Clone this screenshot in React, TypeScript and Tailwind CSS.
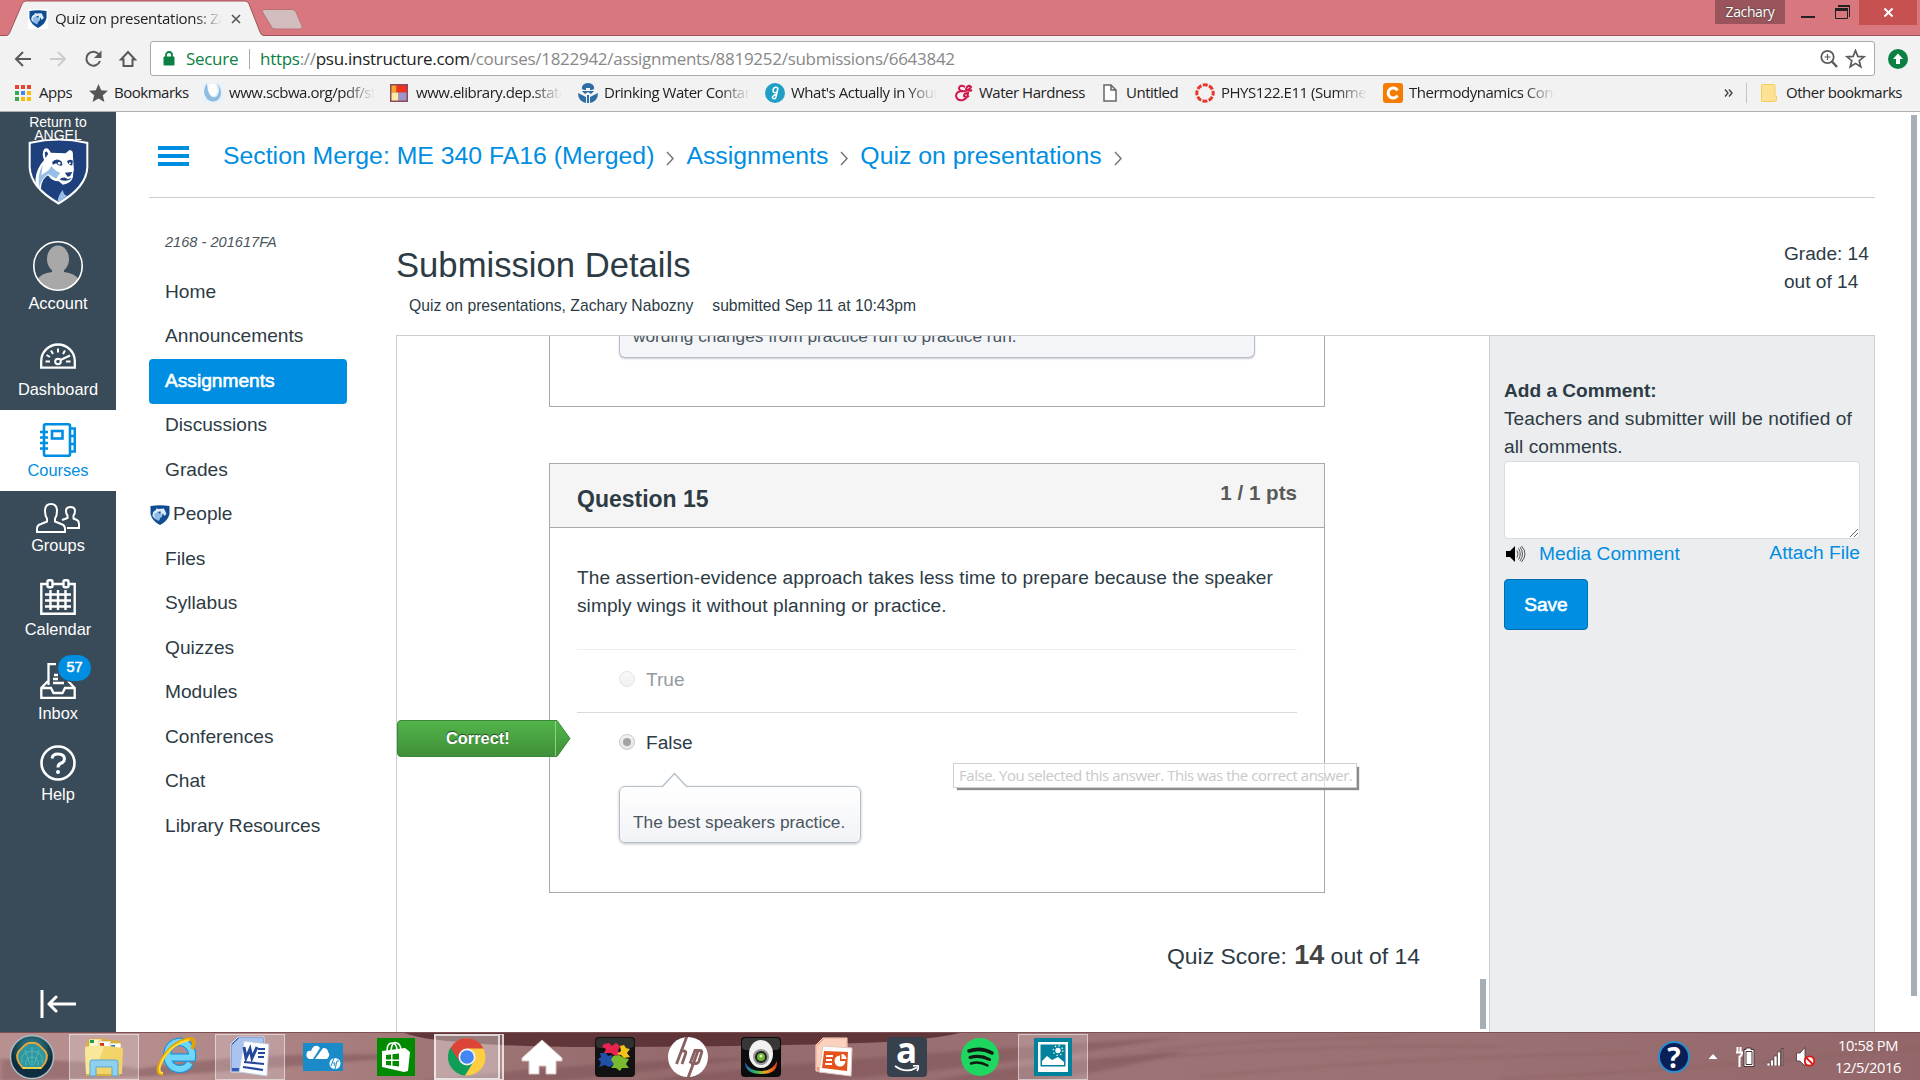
import React from "react";

const ui = "font-['Open_Sans','Noto_Sans',sans-serif]";

function Shield({ className }: { className: string }) {
  return (
    <svg viewBox="0 0 182 201" className={className} preserveAspectRatio="none">
      <path d="M2 12Q91-8 180 12V88Q178 150 91 200Q4 150 2 88Z" fill="#fff" />
      <path d="M8 17Q91-2 174 17V88Q171 146 91 192Q11 146 8 88Z" fill="#1e407c" />
      <path d="M22 126Q24 92 48 66Q40 46 48 34Q58 24 68 44L112 46L124 36Q136 36 134 54L137 96Q134 104 134 118Q128 138 104 140L92 130Q70 130 60 112Q40 122 38 154Q24 142 22 126Z" fill="#fff" />
      <path d="M44 80Q26 112 34 148Q38 124 60 108L84 122L96 104Q80 100 70 84L62 96L40 112ZM88 190Q92 168 104 156Q106 172 118 174L92 192Z" fill="#96bee6" />
      <path d="M50 44Q56 36 60 48L52 60ZM72 72Q84 58 100 70L103 82Q90 86 84 76L74 80ZM116 70Q124 62 134 68L132 82Q122 84 116 70ZM110 104L132 102L126 114L118 116ZM96 122Q112 114 118 124L130 120Q122 132 96 126Z" fill="#1e407c" />
      <circle cx="93" cy="76" r="4" fill="#fff" />
      <circle cx="125" cy="76" r="3" fill="#fff" />
    </svg>
  );
}

function MiniShield({ className }: { className: string }) {
  return (
    <svg viewBox="0 0 20 20" className={className} preserveAspectRatio="none">
      <path d="M.5 1Q10-.6 19.500 1V9Q18 16 10 20Q2 16 .5 9Z" fill="#0f4c92" />
      <path d="M2.500 11Q2.500 6 6 5Q6 2 8 4L14 3.500L16.500 9L14 11L13 8L11 13L8 8L5 14Z" fill="#dcecfa" />
      <path d="M4 9L9 6L12 9L9 16L5 14Z" fill="#8fbce6" />
      <path d="M8 7L11 6.500L10 9Z" fill="#0f4c92" />
    </svg>
  );
}

function TabStrip() {
  return (
    <div className={"flex h-[36px] items-start justify-between border-b border-[#a0535a] bg-[#d9777f] " + ui}>
      <div className="relative h-[36px] w-[310px]">
        <svg className="absolute inset-0" width="310" height="36">
          <path d="M0 35.500H7Q9 35 10 32L22 4Q23 1 26 1H245Q248 1 249 4L260 32Q261 35.500 264 35.500V37H0Z" fill="#f2f2f2" />
          <path d="M0 35.500H7Q9 35 10 32L22 4Q23 1 26 1H245Q248 1 249 4L260 32Q261 35.500 264 35.500H310" fill="none" stroke="#a0535a" />
          <path d="M0 0H21L9 31Q8 35 6 35H0Z" fill="#d9777f" />
          <path d="M264 9.500H292Q295 9.500 296 12L302 26Q303 29 300 29H275Q272 29 271 26L262.500 12Q262 9.500 264 9.500Z" fill="#d2bcbd" stroke="#b9747a" />
        </svg>
        <div className="relative flex h-[35px] items-center pl-[28px] pt-[3px]">
          <span className="flex h-[20px] w-[20px] items-center justify-center bg-white">
            <MiniShield className="h-[18px] w-[18px]" />
          </span>
          <span className="mb-[2px] ml-[7px] w-[167px] overflow-hidden whitespace-nowrap text-[15px] leading-[20px] tracking-[-0.3px] text-[#222] [mask-image:linear-gradient(90deg,#000_140px,transparent)]">
            Quiz on presentations: Zac
          </span>
          <svg className="ml-[9px]" width="10" height="10" viewBox="0 0 10 10">
            <path d="M1 1L9 9M9 1L1 9" stroke="#555" strokeWidth="1.600" />
          </svg>
        </div>
      </div>
      <div className="flex w-[205px] items-start">
        <div className="flex h-[24px] w-[70px] items-center justify-center bg-[#99555b] pb-[2px] text-[14px] tracking-[-0.4px] text-white [text-shadow:0_0_2px_#333]">
          Zachary
        </div>
        <div className="ml-[16px] mt-[16px] h-[2px] w-[14px] bg-[#222]" />
        <svg className="ml-[20px] mt-[4px]" width="16" height="16">
          <path d="M3 1.500H14.500V13M.5 6V14.500H12.500V6Z" fill="none" stroke="#222" />
          <path d="M3 1H15V3H3ZM0 4H13V7H0Z" fill="#222" />
        </svg>
        <div className="ml-[8px] flex h-[25px] w-[58px] items-center justify-center bg-[#c75050] pb-px">
          <svg width="11" height="9" viewBox="0 0 12 10">
            <path d="M1.500 0.500L10.500 9.500M10.500 0.500L1.500 9.500" stroke="#fff" strokeWidth="2.200" />
          </svg>
        </div>
      </div>
    </div>
  );
}

function AddressBar() {
  return (
    <div className={"flex h-[40px] items-center bg-[#f2f2f2] pl-[14px] pt-[5px] " + ui}>
      <svg width="136" height="24" viewBox="0 0 136 24" className="shrink-0" fill="none" strokeWidth="2">
        <path d="M17 12H2M9 5L2 12L9 19" stroke="#5a5a5a" />
        <path d="M36 12H51M44 5L51 12L44 19" stroke="#ccc" />
        <path d="M85 7.500A7 7 0 1 0 86 14" stroke="#5a5a5a" />
        <path d="M87.500 3.500V11H80Z" fill="#5a5a5a" />
        <path d="M107 12.500L114 5L121 12.500H118.500V19H109.500V12.500Z" stroke="#5a5a5a" />
      </svg>
      <div className="flex h-[35px] w-[1725px] items-center rounded-[3px] border border-[#a9a9a9] bg-white">
        <svg className="ml-[12px]" width="12" height="15" viewBox="0 0 12 15">
          <path d="M3 6V4A3 3 0 0 1 9 4V6" fill="none" stroke="#0b8043" strokeWidth="1.800" />
          <rect x=".5" y="5.500" width="11" height="9" rx="1" fill="#0b8043" />
        </svg>
        <span className="ml-[11px] w-[63px] text-[17px] tracking-[-0.3px] text-[#0b8043]">Secure</span>
        <span className="h-[20px] w-px bg-[#aaa]" />
        <span className="ml-[10px] flex-1 whitespace-nowrap text-[17px] tracking-[-0.28px] text-[#888]">
          <span className="text-[#0b8043]">https</span>://<span className="text-[#222]">psu.instructure.com</span>
          /courses/1822942/assignments/8819252/submissions/6643842
        </span>
        <svg width="48" height="20" viewBox="0 0 48 20" className="mr-[8px]" fill="none" stroke="#5a5a5a">
          <circle cx="9.500" cy="8" r="6.200" strokeWidth="1.800" />
          <path d="M14 12.500L19 18" strokeWidth="2.400" />
          <path d="M6.500 8H12.500M9.500 5V11" strokeWidth="1.200" />
          <path d="M37.500 1.500L39.800 7.400L46 7.800L41.200 11.700L42.800 17.800L37.500 14.400L32.200 17.800L33.800 11.700L29 7.800L35.200 7.400Z" strokeWidth="1.700" />
        </svg>
      </div>
      <svg className="ml-[13px]" width="20" height="20" viewBox="0 0 20 20">
        <circle cx="10" cy="10" r="10" fill="#0b8043" />
        <path d="M10 4.500L15 10H12V15H8V10H5Z" fill="#fff" />
      </svg>
    </div>
  );
}

const bookmarkIcons: Record<string, React.ReactNode> = {
  apps: (
    <svg width="16" height="16" viewBox="0 0 16 16">
      {["#ea4335", "#ea4335", "#ea4335", "#34a853", "#4285f4", "#fbbc05", "#34a853", "#fbbc05", "#fbbc05"].map((c, i) => (
        <rect key={i} x={(i % 3) * 6} y={Math.floor(i / 3) * 6} width="4" height="4" fill={c} />
      ))}
    </svg>
  ),
  star: (
    <svg width="19" height="18" viewBox="0 0 19 18">
      <path d="M9.500 0L12.200 6.300L19 6.800L13.800 11.200L15.400 18L9.500 14.400L3.600 18L5.200 11.200L0 6.800L6.800 6.300Z" fill="#555" />
    </svg>
  ),
  drop: (
    <svg width="20" height="20" viewBox="0 0 20 20">
      <rect width="20" height="20" fill="#e9f2f9" />
      <path d="M4 0Q-2 9 4 16Q10 21 16 16Q21 9 14 0Q18 8 14 13Q10 16 7 12Q4 7 4 0Z" fill="#8dbce2" />
      <path d="M6 1Q4 8 8 12Q11 14 13 11Q15 7 12 1Z" fill="#fff" />
    </svg>
  ),
  elib: (
    <svg width="18" height="18" viewBox="0 0 18 18">
      <rect width="18" height="18" fill="#8c4a5c" />
      <rect x="1.500" y="1.500" width="5" height="7" fill="#f6a623" />
      <rect x="6.500" y="1.500" width="10" height="7" fill="#f2311d" />
      <rect x="1.500" y="8.500" width="7" height="8" fill="#ffe9a8" />
      <rect x="8.500" y="8.500" width="8" height="8" fill="#9d95c9" />
    </svg>
  ),
  water: (
    <svg width="20" height="20" viewBox="0 0 20 20">
      <path d="M10 0A6 5 0 0 1 16 6L14 7H12V5H8V7H6L4 6A6 5 0 0 1 10 0Z" fill="#2e6ca4" />
      <path d="M4 8H16L13 11L10 9L7 11ZM0 10L8 14V20Q0 18 0 10ZM20 10L12 14V20Q20 18 20 10ZM9 12H11V20H9Z" fill="#2e6ca4" />
    </svg>
  ),
  g: (
    <svg width="20" height="20" viewBox="0 0 20 20">
      <circle cx="10" cy="10" r="10" fill="#1f9fc6" />
      <path d="M13 5Q9 3 8 7Q8 11 12 9L13 5L11 14Q10 17 7.500 15Q7 13 11 11.500" fill="none" stroke="#fff" strokeWidth="1.500" />
    </svg>
  ),
  amp: (
    <svg width="19" height="18" viewBox="0 0 19 18" fill="none" stroke="#d3154b" strokeWidth="2">
      <path d="M11 3Q6 0 5 4Q5 7 9 7Q2 7 2 12Q3 17 9 16Q14 14 14 9Q10 9 10 12Q12 14 15 12M8 7Q14 8 17 3Q14 0 12 5Q14 8 18 6" />
    </svg>
  ),
  doc: (
    <svg width="14" height="18" viewBox="0 0 14 18" fill="#fff" stroke="#666" strokeWidth="1.500">
      <path d="M1 1H8L13 6V17H1ZM8 1V6H13" />
    </svg>
  ),
  ring: (
    <svg width="20" height="20" viewBox="0 0 20 20">
      <circle cx="10" cy="10" r="8.200" fill="none" stroke="#e8372c" strokeWidth="3" strokeDasharray="5 1.440" strokeDashoffset="2.500" />
    </svg>
  ),
  c: (
    <svg width="20" height="20" viewBox="0 0 20 20">
      <rect width="20" height="20" rx="3" fill="#f57c00" />
      <path d="M14.500 7.500A5 5 0 1 0 14.500 12.500" fill="none" stroke="#fff" strokeWidth="3" />
    </svg>
  ),
};

const bookmarks = [
  { icon: "apps", text: "Apps", slot: "w-[74px]", gap: "w-[24px]" },
  { icon: "star", text: "Bookmarks", slot: "w-[114px]", gap: "w-[25px]" },
  { icon: "drop", text: "www.scbwa.org/pdf/stu", slot: "w-[187px]", gap: "w-[26px]", fade: true },
  { icon: "elib", text: "www.elibrary.dep.state.", slot: "w-[188px]", gap: "w-[26px]", fade: true },
  { icon: "water", text: "Drinking Water Contan", slot: "w-[187px]", gap: "w-[26px]", fade: true },
  { icon: "g", text: "What's Actually in Your", slot: "w-[189px]", gap: "w-[26px]", fade: true },
  { icon: "amp", text: "Water Hardness", slot: "w-[149px]", gap: "w-[25px]" },
  { icon: "doc", text: "Untitled", slot: "w-[92px]", gap: "w-[23px]" },
  { icon: "ring", text: "PHYS122.E11 (Summer", slot: "w-[188px]", gap: "w-[26px]", fade: true },
  { icon: "c", text: "Thermodynamics Conc", slot: "w-[190px]", gap: "w-[26px]", fade: true },
];

function BookmarksBar() {
  return (
    <div className={"flex h-[36px] items-center border-b border-[#b0b0b0] bg-[#f2f2f2] pb-px pl-[15px] text-[15px] tracking-[-0.48px] text-[#222] " + ui}>
      {bookmarks.map((b) => (
        <div key={b.text} className={"flex shrink-0 items-center " + b.slot}>
          <span className={"shrink-0 " + b.gap}>{bookmarkIcons[b.icon]}</span>
          <span
            className={
              "mb-px overflow-hidden whitespace-nowrap " +
              (b.fade ? "w-[146px] [mask-image:linear-gradient(90deg,#000_115px,transparent)]" : "")
            }
          >
            {b.text}
          </span>
        </div>
      ))}
      <svg className="ml-[151px]" width="9" height="8" viewBox="0 0 9 8" fill="none" stroke="#444" strokeWidth="1.400">
        <path d="M1 .5L4 4L1 7.500M5 .5L8 4L5 7.500" />
      </svg>
      <span className="ml-[13px] h-[20px] w-px bg-[#c4c4c4]" />
      <svg className="ml-[14px]" width="16" height="18" viewBox="0 0 16 18">
        <path d="M1 .5H13Q14 .5 14 2V12H15.500V16Q15 17.500 13 17.500H1Q.5 17.500 .5 17V1Z" fill="#fde293" stroke="#f3cf62" />
      </svg>
      <span className="mb-px ml-[9px] whitespace-nowrap">Other bookmarks</span>
    </div>
  );
}

function RailItem({ box, label, gap, children, active }: { box: string; label: string; gap: string; children: React.ReactNode; active?: boolean }) {
  return (
    <div className={"flex flex-col items-center " + box + (active ? " bg-white text-[#008ee2]" : " text-white")}>
      {children}
      <span className={"text-[16.4px] leading-[20px] " + gap}>{label}</span>
    </div>
  );
}

function Rail() {
  return (
    <nav className="flex w-[116px] shrink-0 flex-col items-center bg-[#394b58] font-['Liberation_Sans',Arial,sans-serif]">
      <div className="flex h-[123px] w-full flex-col items-center pt-[4px] text-[14px] leading-[12.500px] text-white">
        <span>Return to</span>
        <span className="h-[9px] overflow-visible">ANGEL</span>
        <Shield className="relative mt-[0px] h-[67px] w-[61px]" />
      </div>
      <RailItem box="h-[103px] w-full pt-[6px]" label="Account" gap="mt-[2px]">
        <svg width="50" height="50" viewBox="0 0 50 50">
          <clipPath id="av"><circle cx="25" cy="25" r="24" /></clipPath>
          <circle cx="25" cy="25" r="24" fill="#394b58" />
          <g clipPath="url(#av)" fill="#a8a8a8">
            <ellipse cx="25" cy="18" rx="11" ry="13.500" />
            <path d="M19 26H31V31Q42 32 46 39V50H4V39Q8 32 19 31Z" />
          </g>
          <circle cx="25" cy="25" r="24.200" fill="none" stroke="#fff" strokeWidth="1.600" />
        </svg>
      </RailItem>
      <RailItem box="h-[72px] w-full pt-[5px]" label="Dashboard" gap="mt-[10px]">
        <svg width="36" height="26" viewBox="0 0 36 26" fill="none" stroke="#fff" strokeWidth="2">
          <path d="M1.200 24.700V18A16.800 16.500 0 0 1 34.800 18V24.700Z" strokeWidth="2.300" />
          <circle cx="18" cy="18.500" r="2.800" />
          <path d="M20.500 17L30 12.500M5.500 18.500H10M26 18.500H30.500M6.500 12L10 14M11 7.500L13 11M18 5.500V9.500M25 7.500L23 11" />
        </svg>
      </RailItem>
      <RailItem active box="h-[81px] w-full pt-[13px]" label="Courses" gap="mt-[3px]">
        <svg width="36" height="34" viewBox="0 0 36 34" fill="none" stroke="#008ee2" strokeWidth="2.600">
          <rect x="4" y="1.300" width="26" height="31.400" rx="1.500" />
          <rect x="12" y="8" width="10.500" height="7.500" />
          <path d="M30 5.500H34.800V28.500H30M30 13H35M30 21H35M0 9H8M0 14.500H8M0 20H8M0 25.500H8" />
        </svg>
      </RailItem>
      <RailItem box="h-[87px] w-full pt-[12px]" label="Groups" gap="mt-[2px]">
        <svg width="44" height="30" viewBox="0 0 44 30" fill="none" stroke="#fff" strokeWidth="2">
          <path d="M1 29V26Q1 22 5 21L11 18.500V15.500Q9 13 9 8Q9 1 15 1Q21 1 21 8Q21 13 19 15.500V18.500L25 21Q29 22 29 26V29Z" />
          <path d="M26 17L31.500 15V12.500Q30 11 30 8Q30 4 34.500 4Q39 4 39 8Q39 11 37.500 12.500V15.500L41 17Q43 18 43 21V25H31" />
        </svg>
      </RailItem>
      <RailItem box="h-[80px] w-full pt-[1px]" label="Calendar" gap="mt-[4px]">
        <svg width="36" height="36" viewBox="0 0 36 36" fill="none" stroke="#fff" strokeWidth="2.400">
          <path d="M7 5H1.300V34.700H34.700V5H29M13 5H23" />
          <rect x="7.500" y="1.200" width="5" height="7" rx="1.500" />
          <rect x="23.500" y="1.200" width="5" height="7" rx="1.500" />
          <path d="M5 15.500H31M5 21.500H31M5 27.500H31M10.500 11V31M18 11V31M25.500 11V31" />
        </svg>
      </RailItem>
      <RailItem box="relative h-[80px] w-full pt-[5px]" label="Inbox" gap="mt-[4px]">
        <svg width="36" height="36" viewBox="0 0 36 36" fill="none" stroke="#fff" strokeWidth="2.300">
          <path d="M8.500 22V1.200H16M14 12H18M13 20H24M13 16H18" />
          <path d="M8 18L1.300 25V34.800H34.700V25L28 18M1.300 25H11L13.500 30H22.500L25 25H34.700" />
        </svg>
        <span className="absolute left-[57px] top-[-4px] flex h-[28px] w-[35px] items-center justify-center rounded-full border border-[#394b58] bg-[#008ee2] text-[14.500px] [-webkit-text-stroke:0.5px_#fff]">
          57
        </span>
      </RailItem>
      <RailItem box="h-[80px] w-full pt-[7px]" label="Help" gap="mt-[3px]">
        <svg width="36" height="36" viewBox="0 0 36 36" fill="none" stroke="#fff">
          <circle cx="18" cy="18" r="16.500" strokeWidth="2.600" />
          <path d="M12 13.500Q12.500 9 18 9Q24.500 9 24.500 14Q24.500 17 20.500 18.500Q18 19.500 18 22.500" strokeWidth="3" />
          <circle cx="18" cy="27" r="2" fill="#fff" stroke="none" />
        </svg>
      </RailItem>
      <svg className="mb-[14px] mt-auto" width="36" height="28" viewBox="0 0 36 28" fill="none" stroke="#fff" strokeWidth="3">
        <path d="M2 0V28" />
        <path d="M36 14H9M16 7L9 14L16 21" strokeLinecap="round" strokeLinejoin="round" />
      </svg>
    </nav>
  );
}

const courseLinks = [
  "Home", "Announcements", "Assignments", "Discussions", "Grades", "People", "Files",
  "Syllabus", "Quizzes", "Modules", "Conferences", "Chat", "Library Resources",
];

function CourseNav() {
  return (
    <aside className="flex w-[198px] shrink-0 flex-col pt-[34px]">
      <span className="pl-[16px] text-[14.600px] italic leading-[20px] text-[#4a565e]">2168 - 201617FA</span>
      <div className="mt-[18px] flex flex-col">
        {courseLinks.map((l) =>
          l === "Assignments" ? (
            <a key={l} className="flex h-[44.500px] items-center rounded-[4px] bg-[#008ee2] pl-[16px] text-[19.150px] text-white [-webkit-text-stroke:0.6px_#fff]">
              {l}
            </a>
          ) : l === "People" ? (
            <a key={l} className="flex h-[44.500px] items-center pl-[1px]">
              <MiniShield className="mr-[3px] h-[20px] w-[20px]" />
              {l}
            </a>
          ) : (
            <a key={l} className="flex h-[44.500px] items-center pl-[16px] text-[19.150px]">{l}</a>
          ),
        )}
      </div>
    </aside>
  );
}

function Crumb({ children }: { children: string }) {
  return (
    <>
      <span className="whitespace-nowrap">{children}</span>
      <svg className="ml-[12px] mr-[11px] mt-[5px]" width="9" height="15" viewBox="0 0 9 15" fill="none" stroke="#777" strokeWidth="1.500">
        <path d="M1 1L7 7.500L1 14" />
      </svg>
    </>
  );
}

function Radio({ on }: { on?: boolean }) {
  return (
    <span className={"flex h-[16px] w-[16px] items-center justify-center rounded-full border border-[#c9c9c9] bg-gradient-to-b from-[#f2f2f2] to-[#e6e6e6]" + (on ? "" : " opacity-50")}>
      {on && <span className="h-[8px] w-[8px] rounded-full bg-[#a3a3a3]" />}
    </span>
  );
}

function QuizPane() {
  return (
    <section className="relative w-[1092px] shrink-0 overflow-hidden">
      <div className="ml-[152px] flex h-[71px] w-[776px] flex-col border border-t-0 border-[#aaa] pl-[69px]">
        <div className="flex h-[22px] w-[636px] items-end overflow-hidden rounded-b-[6px] border border-t-0 border-[#b4bfc9] bg-[#f4f5f8] pb-[9px] pl-[13px] text-[17.250px] leading-[24px] text-[#4a565e] shadow-[0_1px_2px_rgba(0,0,0,0.2)]">
          <span className="whitespace-nowrap">wording changes from practice run to practice run.</span>
        </div>
      </div>
      <div className="ml-[152px] mt-[56px] h-[430px] w-[776px] border border-[#aaa]">
        <div className="flex h-[64px] items-center justify-between border-b border-[#aaa] bg-[#f5f5f5] px-[27px] font-bold">
          <span className="mt-[7px] text-[23px]">Question 15</span>
          <span className="mb-[4px] text-[20.600px] text-[#595959]">1 / 1 pts</span>
        </div>
        <div className="px-[27px] pt-[36px]">
          <p className="h-[85px] whitespace-nowrap leading-[28px] tracking-[0.085px]">
            The assertion-evidence approach takes less time to prepare because the speaker
            <br />
            simply wings it without planning or practice.
          </p>
          <div className="flex h-[63px] items-center border-t border-[#eee] pb-[4px] pl-[42px] text-[#939ba1]">
            <Radio />
            <span className="ml-[11px] mt-[3px]">True</span>
          </div>
          <div className="relative flex h-[63px] items-center border-t border-[#d8dbdd] pb-[4px] pl-[42px]">
            <Radio on />
            <span className="ml-[11px] mt-[3px]">False</span>
            <div className="absolute left-[-180px] top-[7px] flex h-[37px] w-[174px] items-center">
              <svg className="absolute inset-0" width="174" height="38">
                <defs>
                  <linearGradient id="ok" x1="0" y1="0" x2="0" y2="1">
                    <stop offset="0" stopColor="#52b54a" />
                    <stop offset="1" stopColor="#3f8f39" />
                  </linearGradient>
                </defs>
                <path d="M4 .5H160L173 18.500L160 36.500H4Q.5 36.500 .5 33V4Q.5.5 4 .5Z" fill="url(#ok)" stroke="#3a8a35" />
                <path d="M158.500 1V36" stroke="#8fd089" />
              </svg>
              <span className="relative ml-[49px] text-[16.400px] font-bold text-white [text-shadow:0_-1px_1px_rgba(0,0,0,0.6)]">Correct!</span>
            </div>
          </div>
          <div className="relative ml-[42px] mt-[11px] flex h-[57px] w-[242px] items-center whitespace-nowrap rounded-[6px] border border-[#b4bfc9] bg-gradient-to-b from-white to-[#f2f3f7] pl-[13px] pt-[16px] text-[17.300px] text-[#4a565e] shadow-[0_1px_3px_rgba(0,0,0,0.25)]">
            The best speakers practice.
            <svg className="absolute left-[41px] top-[-15px]" width="28" height="16">
              <path d="M1 15L13.500 1.500L26 15" fill="#fff" stroke="#b4bfc9" strokeWidth="1.300" />
              <path d="M2 15.500H25" stroke="#fff" strokeWidth="2" />
            </svg>
          </div>
        </div>
      </div>
      <div className="ml-[770px] mt-[46px] flex h-[34px] items-center whitespace-nowrap text-[22.950px]">
        Quiz Score:&nbsp;<b className="mb-[2px] ml-px text-[27px] text-[#444]">14</b>&nbsp;out of 14
      </div>
      <div className="absolute bottom-[3px] right-[3px] h-[50px] w-[6px] bg-[#a5afb5]" />
      <div className={"absolute left-[556px] top-[427px] flex h-[25px] w-[404px] items-center whitespace-nowrap border border-[#d0d0d0] bg-white/60 pb-px pl-[5px] text-[15px] tracking-[-0.470px] text-[#c9c9c9] shadow-[3px_3px_1px_-1px_#8c8c8c] " + ui}>
        False. You selected this answer. This was the correct answer.
      </div>
    </section>
  );
}

function CommentPane() {
  return (
    <section className="flex flex-1 flex-col items-start border-x border-[#c7cdd1] bg-[#ebedee] pl-[14px] pr-[14px] pt-[41px]">
      <b className="leading-[28px]">Add a Comment:</b>
      <p className="whitespace-nowrap leading-[28px] tracking-[0.075px]">
        Teachers and submitter will be notified of
        <br />
        all comments.
      </p>
      <div className="flex h-[78px] w-full items-end justify-end rounded-[4px] border border-[#d6dde2] bg-white p-px">
        <svg width="8" height="8" viewBox="0 0 8 8">
          <path d="M0 8L8 0M4 8L8 4" stroke="#666" />
        </svg>
      </div>
      <div className="flex h-[28px] w-full items-center pt-[2px] text-[#008ee2]">
        <svg className="ml-[2px]" width="20" height="18" viewBox="0 0 20 18">
          <path d="M0 6H4L9 1V17L4 12H0Z" fill="#000" />
          <path d="M11 5.500Q13 9 11 12.500M12.500 3.500Q16 9 12.500 14.500M14 2Q19 9 14 16M15.500 1Q22.500 9 15.500 17" fill="none" stroke="#555" strokeWidth="1" />
        </svg>
        <span className="ml-[13px] flex-1 text-[19.200px]">Media Comment</span>
        <span className="mb-[2px] text-[19.200px]">Attach File</span>
      </div>
      <div className="mt-[12px] flex h-[51px] w-[84px] items-center justify-center rounded-[4px] border border-[#006eae] bg-[#008ee2] pt-[2px] text-white [-webkit-text-stroke:0.6px_#fff]">
        Save
      </div>
    </section>
  );
}

function Page() {
  return (
    <div className="flex h-[920px] bg-white">
      <Rail />
      <main className="flex flex-1 flex-col pl-[33px] font-['Liberation_Sans',Arial,sans-serif] text-[19.080px] text-[#2d3b45]">
        <header className="flex h-[86px] w-[1726px] items-center border-b border-[#c7cdd1] pt-[2px] text-[24.800px] text-[#008ee2]">
          <span className="ml-[9px] mr-[34px] flex w-[31px] flex-col gap-[4px]">
            <span className="h-[4px] bg-[#008ee2]" />
            <span className="h-[4px] bg-[#008ee2]" />
            <span className="h-[4px] bg-[#008ee2]" />
          </span>
          <Crumb>Section Merge: ME 340 FA16 (Merged)</Crumb>
          <Crumb>Assignments</Crumb>
          <Crumb>Quiz on presentations</Crumb>
        </header>
        <div className="flex flex-1">
          <CourseNav />
          <div className="ml-[49px] flex w-[1479px] flex-col">
            <div className="flex h-[137px] justify-between">
              <div className="pt-[46px]">
                <h1 className="text-[34.650px] leading-[42px]">Submission Details</h1>
                <p className="mt-[10px] flex gap-[19px] pl-[13px] text-[15.700px] leading-[20px]">
                  <span>Quiz on presentations, Zachary Nabozny</span>
                  <span>submitted Sep 11 at 10:43pm</span>
                </p>
              </div>
              <p className="w-[91px] whitespace-nowrap pt-[42px] leading-[28px]">
                Grade: 14
                <br />
                out of 14
              </p>
            </div>
            <div className="flex h-[697px] border-l border-t border-[#c7cdd1]">
              <QuizPane />
              <CommentPane />
            </div>
          </div>
        </div>
      </main>
      <div className="mr-[3px] mt-[3px] h-[881px] w-[6px] bg-[#a5afb5]" />
    </div>
  );
}

const taskIcons: { key: string; frame?: boolean; art: React.ReactNode }[] = [
  {
    key: "explorer", frame: true, art: (
      <svg width="40" height="42" viewBox="0 0 40 42">
        <path d="M4 4L14 2L36 5V40H2V8Z" fill="#d8b03d" />
        <path d="M5 3H18V12H5Z" fill="#fff6d0" stroke="#c7a23a" strokeWidth=".6" />
        <path d="M6 4H10V7H6Z" fill="#1f9c4a" /><path d="M15 5H27V13H15Z" fill="#fff" stroke="#c7a23a" strokeWidth=".6" />
        <path d="M16 7H20V10H16Z" fill="#d8321f" /><path d="M26 7H37V14H26Z" fill="#fff" stroke="#c7a23a" strokeWidth=".6" /><path d="M27 9H31V12H27Z" fill="#2a7cc9" />
        <path d="M1 11Q18 8 39 12L38 38H2Z" fill="#f3d468" /><path d="M1 11Q18 8 20 11L10 38H2Z" fill="#f9e89a" />
        <path d="M6 26Q6 24 8 24H32Q34 24 34 26V40H28V31H12V40H6Z" fill="#8fd0ee" stroke="#5aa7d0" />
      </svg>
    ),
  },
  {
    key: "ie", art: (
      <svg width="42" height="42" viewBox="0 0 42 42" fill="none">
        <path d="M34 27A12.500 13.500 0 1 1 36 21.500H14" stroke="#1f93d8" strokeWidth="8.500" />
        <path d="M34 27A12.500 13.500 0 1 1 36 21.500H14" stroke="#6fd6fb" strokeWidth="6" />
        <path d="M7 38Q-2 38 6 24Q16 6 33 3Q41 2 36 13" stroke="#e2a500" strokeWidth="3.500" />
        <path d="M7 37Q0 37 7 23Q17 7 33 4" stroke="#ffdb3a" strokeWidth="2" />
      </svg>
    ),
  },
  {
    key: "word", frame: true, art: (
      <svg width="40" height="42" viewBox="0 0 40 42">
        <path d="M8 1H34V36H1V8Z" fill="#2f5db3" stroke="#dfe9f8" /><path d="M9 2H33V12Q14 12 10 32H2V9Z" fill="#a9c4ee" />
        <path d="M14 5L39 8L37 40L9 36Z" fill="#fafcff" stroke="#b8c4d8" strokeWidth=".8" />
        <path d="M14 11L16 22L20 13L22 22L27 11" fill="none" stroke="#25479a" strokeWidth="3" />
        <path d="M28 13H35M28 17H35M28 21H34M14 26L34 28M13 31L33 34" stroke="#25479a" strokeWidth="2.200" />
      </svg>
    ),
  },
  {
    key: "cloud", art: (
      <svg width="40" height="28" viewBox="0 0 40 28">
        <rect width="40" height="28" fill="#1a8ac9" />
        <path d="M6 16Q2 14 4 9Q6 7 8 8Q10 2 15 3L17 5L10 16ZM12 16L20 5Q25 5 25 9Q28 12 24 16Z" fill="#fff" />
        <circle cx="32" cy="20.500" r="5.500" fill="#fff" /><path d="M31 15L28 23M30 20H32L31 23M36 18H34L32 26" stroke="#1a8ac9" fill="none" />
      </svg>
    ),
  },
  {
    key: "store", art: (
      <svg width="38" height="38" viewBox="0 0 38 38">
        <rect width="38" height="38" fill="#008a00" />
        <path d="M5 13L28 10L33 14L31 33L27 34L5 29Z" fill="#fff" />
        <path d="M10 13Q10 5 15 5Q19 5 20 11M14 12Q15 3 20 5Q23 6 24 11" fill="none" stroke="#fff" strokeWidth="1.600" />
        <path d="M9 17L14 16.500V21.500H9ZM15.500 16.200L22 15.500V21.500H15.500ZM9 23H14V27.500L9 27ZM15.500 23H22V28.500L15.500 27.700Z" fill="#008a00" />
      </svg>
    ),
  },
  {
    key: "chrome", frame: true, art: (
      <svg width="38" height="38" viewBox="0 0 38 38">
        <circle cx="19" cy="19" r="18.500" fill="#ffcd40" />
        <path d="M19 19L2.500 9.500A18.500 18.500 0 0 0 17 37.400L26 23Z" fill="#0f9d58" />
        <path d="M2.700 10A18.500 18.500 0 0 1 35.500 10.500H19L11.700 23.500Z" fill="#db4437" />
        <circle cx="19" cy="19" r="8.500" fill="#f1f1f1" /><circle cx="19" cy="19" r="6.800" fill="#4285f4" />
      </svg>
    ),
  },
  {
    key: "home", art: (
      <svg width="42" height="36" viewBox="0 0 42 36">
        <path d="M21 1L41 19V22H35V35H25V27H18V35H8V22H1V19Z" fill="#fff" stroke="#d9c4c4" />
      </svg>
    ),
  },
  {
    key: "puzzle", art: (
      <svg width="40" height="40" viewBox="0 0 40 40">
        <rect width="40" height="40" rx="4" fill="#121212" /><rect x="1" y="1" width="38" height="10" rx="4" fill="#444" opacity=".6" />
        <path d="M9 7L14 6L17 9L21 6L25 9L23 14L26 17L20 19L16 16L9 16L11 12L7 10Z" fill="#e8234f" />
        <path d="M25 9L29 8L31 11L35 12L32 16L35 20L29 21L26 18L22 17L26 14Z" fill="#f5c21b" />
        <path d="M5 16L11 16L13 19L17 18L17 24L20 27L14 30L10 28L4 30L6 25L3 22L6 20Z" fill="#2150a8" />
        <path d="M18 19L24 18L29 21L34 22L31 27L34 31L27 31L25 34L21 31L16 31L19 27L16 23Z" fill="#7aba2e" />
      </svg>
    ),
  },
  {
    key: "hp", art: (
      <svg width="40" height="40" viewBox="0 0 40 40" fill="none">
        <circle cx="20" cy="20" r="20" fill="#fff" />
        <path d="M19 -1L8.500 27M12 14H16Q18.500 14 17.500 17L14 27M20 41L30 14M22 26.500L27 13.500H32Q34.500 13.500 33.500 16L31 24Q30 26.500 28 26.500H23" stroke="#8a6163" strokeWidth="2.800" />
      </svg>
    ),
  },
  {
    key: "webcam", art: (
      <svg width="40" height="40" viewBox="0 0 40 40">
        <defs><linearGradient id="rb"><stop offset="0" stopColor="#2455c9" /><stop offset=".35" stopColor="#2fc45a" /><stop offset=".65" stopColor="#f3a31b" /><stop offset="1" stopColor="#e8311c" /></linearGradient></defs>
        <rect width="40" height="40" rx="4" fill="#0c0c0c" /><rect x="1" y="1" width="38" height="12" rx="4" fill="#555" opacity=".6" />
        <path d="M4 25Q8 34 20 34Q32 34 36 24Q37 37 20 37Q4 37 4 25Z" fill="url(#rb)" />
        <ellipse cx="20" cy="17" rx="12" ry="14" fill="#f1f1f1" /><circle cx="20" cy="20" r="8" fill="#999" /><circle cx="20" cy="20" r="6" fill="#222" /><circle cx="20" cy="20" r="4" fill="#6db52e" /><circle cx="20" cy="19" r="1.500" fill="#e5ffd0" />
      </svg>
    ),
  },
  {
    key: "ppt", art: (
      <svg width="38" height="40" viewBox="0 0 38 40">
        <path d="M8 1H32V34H1V8Z" fill="#f2936e" stroke="#ffe3d6" /><path d="M9 2H31V10Q14 12 10 30H2V9Z" fill="#fbd2c0" />
        <path d="M8 9L37 11L36 39L4 35Z" fill="#fff" stroke="#e3c8bd" /><path d="M9 14L33 15L32 34L7 31Z" fill="#e4531b" />
        <path d="M11 19H18M11 23H17M10 27H17" stroke="#fff" strokeWidth="2" /><circle cx="25" cy="24" r="5.500" fill="#fff" /><path d="M25 24V18A6 6 0 0 1 31 24Z" fill="#e4531b" /><path d="M26.500 22V17A5 5 0 0 1 31.500 22Z" fill="#fff" />
      </svg>
    ),
  },
  {
    key: "amazon", art: (
      <div className="flex h-[40px] w-[40px] flex-col items-center rounded-[4px] bg-[#36414d]">
        <span className="h-[28px] font-['Open_Sans',sans-serif] text-[35px] font-bold leading-[26px] text-white">a</span>
        <svg width="26" height="8" viewBox="0 0 26 8" fill="none" stroke="#fff" strokeWidth="1.700">
          <path d="M1 1Q12 9 23 2.500M19 1Q25 0 24 1Q25 3 23 6" />
        </svg>
      </div>
    ),
  },
  {
    key: "spotify", art: (
      <svg width="40" height="40" viewBox="0 0 40 40" fill="none" stroke="#0e1a12" strokeLinecap="round">
        <circle cx="20" cy="20" r="19" fill="#1ed760" stroke="none" />
        <path d="M9 14Q21 10 32 16" strokeWidth="3.600" /><path d="M10 20.500Q20 17.500 29.500 22.500" strokeWidth="3" /><path d="M11 26.500Q19 24 27.500 28.500" strokeWidth="2.500" />
      </svg>
    ),
  },
  {
    key: "photos", frame: true, art: (
      <svg width="38" height="38" viewBox="0 0 38 38">
        <rect width="38" height="38" fill="#00819c" />
        <path d="M4 4H34V34H4ZM6.500 6.500V28.500H31.500V6.500Z" fill="#fff" fillRule="evenodd" />
        <path d="M8 27V23L13 18L18 22L24 19L30 24V27Z" fill="#fff" /><circle cx="24" cy="12.500" r="2.700" fill="#fff" />
        <circle cx="24" cy="12.500" r="4.800" fill="none" stroke="#fff" strokeWidth="1.300" strokeDasharray="1.300 2.470" />
      </svg>
    ),
  },
];

function Taskbar() {
  return (
    <div className="relative flex h-[48px] items-center overflow-hidden border-t border-[#7d5154] bg-[linear-gradient(90deg,#b99090_0,#b48c8c_180px,#a17677_420px,#94696b_700px,#9d7375_1100px,#9b7072_1500px,#936769_1920px)]">
      <svg className="absolute inset-0" width="1920" height="48" preserveAspectRatio="none">
        <defs><filter id="soft" x="-5%" y="-20%" width="110%" height="140%"><feGaussianBlur stdDeviation="3 1.500" /></filter></defs>
        <path d="M400 -2H968Q930 8 860 10Q740 14 620 14Q500 15 430 6Q410 3 400 -2Z" fill="#5a3033" opacity=".9" />
        <g filter="url(#soft)">
          <path d="M0 26Q80 26 140 36Q240 18 420 22Q300 34 140 44L0 48Z" fill="#6f4649" opacity=".4" />
          <path d="M640 48Q800 26 1180 4Q1000 34 820 48ZM420 48Q560 30 760 24Q640 40 560 48ZM930 48Q1050 26 1190 18Q1100 40 1040 48Z" fill="#6d4548" opacity=".35" />
          <path d="M1100 30Q1300 10 1500 14M1200 44Q1400 24 1640 20M1500 46Q1700 36 1920 14M1150 18Q1250 6 1400 4" stroke="#835a5d" strokeWidth="3" fill="none" opacity=".3" />
        </g>
      </svg>
      <svg className="relative ml-[9px] mr-[12px] shrink-0" width="46" height="46" viewBox="0 0 46 46">
        <defs><radialGradient id="orb" cx=".5" cy=".3"><stop offset="0" stopColor="#3f8f98" /><stop offset=".6" stopColor="#1f5866" /><stop offset="1" stopColor="#0f2d40" /></radialGradient></defs>
        <circle cx="23" cy="23" r="21.500" fill="url(#orb)" stroke="#a9bcc2" strokeWidth="1.500" />
        <path d="M16 34H14L10 29Q5 20 13 14Q18 8 23 9Q28 8 33 14Q41 20 36 29L32 34H30" fill="#2f97a0" stroke="#f1a83a" strokeWidth="1.800" />
        <path d="M14 34H32" stroke="#f5e34a" strokeWidth="1.800" />
        <path d="M17 32Q15 24 23 23Q31 24 29 32M13 29Q11 18 23 17Q35 18 33 29M23 13V32M16 16L21 31M30 16L25 31" fill="none" stroke="#69c5c8" opacity=".6" />
      </svg>
      {taskIcons.map((t) => (
        <div key={t.key} className="relative flex h-[48px] w-[73px] shrink-0 items-center justify-center">
          <div
            className={
              "flex h-[46px] items-center justify-center " +
              (t.key === "chrome" ? "w-[66px] border-2 border-white/70 bg-white/35" : t.frame ? "w-[70px] border border-white/50 bg-white/20" : "w-[70px]")
            }
          >
            {t.art}
          </div>
          {t.key === "chrome" && <span className="h-[46px] w-[4px] border-y border-r-2 border-white/70 bg-white/20" />}
        </div>
      ))}
      <div className="relative ml-auto flex items-center">
        <div className="flex h-[32px] w-[32px] items-center justify-center rounded-full border-2 border-[#2a8fd2] bg-[#0a1f55] font-['Open_Sans',sans-serif] text-[28px] font-bold leading-none text-white">?</div>
        <svg className="ml-[17px]" width="12" height="7" viewBox="0 0 12 7"><path d="M6 .5L11.500 6.500H.5Z" fill="#fff" stroke="#6b4a4c" strokeWidth=".6" /></svg>
        <svg className="ml-[17px]" width="20" height="20" viewBox="0 0 20 20">
          <path d="M8 2.500H10V1H15V2.500H18V19.500H8Z" fill="#fff" stroke="#4a3032" /><path d="M10 4.500H16V17.500H10Z" fill="#fff" stroke="#4a3032" />
          <path d="M1.500 0V5M4.500 0V5M0 5.500H6Q6 9 3.500 9.500V20" fill="none" stroke="#fff" strokeWidth="2" />
        </svg>
        <svg className="ml-[11px]" width="17" height="18" viewBox="0 0 17 18" stroke="#4a3032" strokeWidth=".6">
          <path d="M0 15H3V18H0ZM3.500 12H6.500V18H3.500ZM7 8H10V18H7ZM10.500 4H13.500V18H10.500Z" fill="#fff" /><path d="M14 .5H17V18H14Z" fill="#8f7476" />
        </svg>
        <svg className="ml-[12px]" width="20" height="20" viewBox="0 0 20 20">
          <path d="M.5 6H4L9 .5V19L4 14H.5Z" fill="#fff" stroke="#4a3032" strokeWidth=".8" />
          <circle cx="13.500" cy="14" r="4.700" fill="#fff" stroke="#e01616" strokeWidth="1.800" /><path d="M10.500 11L16.500 17" stroke="#e01616" strokeWidth="1.800" />
        </svg>
        <div className={"ml-[17px] mr-[17px] flex w-[70px] flex-col items-center whitespace-nowrap pb-px text-[14.700px] leading-[22px] tracking-[-0.400px] text-white " + ui}>
          <span>10:58 PM</span>
          <span>12/5/2016</span>
        </div>
      </div>
    </div>
  );
}

export default function App() {
  return (
    <div className="h-[1080px] w-[1920px] overflow-hidden bg-white">
      <TabStrip />
      <AddressBar />
      <BookmarksBar />
      <Page />
      <Taskbar />
    </div>
  );
}
